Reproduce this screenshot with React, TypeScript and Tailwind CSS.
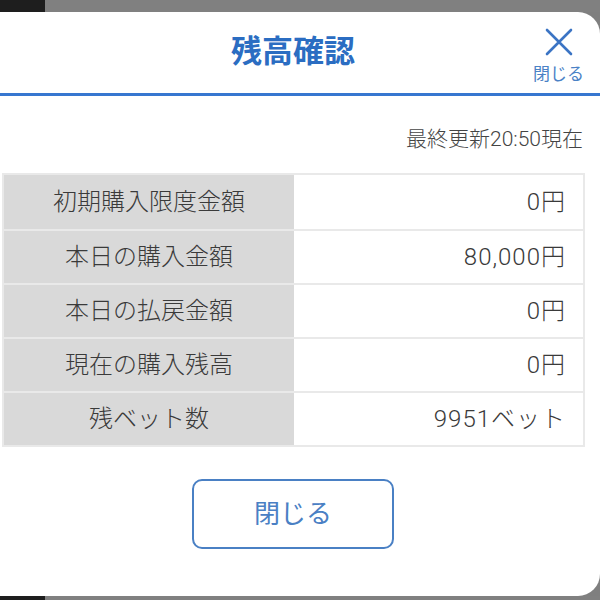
import React from 'react';

const rows: { label: string; value: string }[] = [
  { label: '初期購入限度金額', value: '0円' },
  { label: '本日の購入金額', value: '80,000円' },
  { label: '本日の払戻金額', value: '0円' },
  { label: '現在の購入残高', value: '0円' },
  { label: '残ベット数', value: '9951ベット' },
];

const font = { fontFamily: 'Roboto, "Noto Sans CJK JP", sans-serif' };

const App: React.FC = () => {
  return (
    <div className="w-[600px] h-[600px] flex flex-col bg-[#7f7f7f] overflow-hidden" style={font}>
      {/* backdrop strip */}
      <div className="flex h-[12px] shrink-0">
        <div className="w-[45px] bg-[#1e1e1e]" />
        <div className="flex-1 bg-[#808080]" />
      </div>

      {/* modal */}
      <div className="flex flex-col h-[584px] bg-white rounded-r-[22px]">
        <div className="relative h-[84px] flex items-center justify-center pr-[14px] border-b-[3px] border-[#3777d0]">
          <h2 className="text-[31px] font-bold text-[#2b6dc2]">残高確認</h2>
          <button className="absolute right-[16px] top-[16px] flex flex-col items-center text-[#4b82c6]">
            <svg width="28" height="28" viewBox="0 0 28 28" fill="none" stroke="#3b74c4" strokeWidth="2.6" strokeLinecap="round">
              <path d="M2 2 L26 26 M26 2 L2 26" />
            </svg>
            <span className="text-[17px] leading-none mt-[10px]">閉じる</span>
          </button>
        </div>

        <div className="flex justify-end pr-[17px] pt-[28px] pb-[19px]">
          <span className="text-[21px] leading-[30px] text-[#444] font-light">最終更新20:50現在</span>
        </div>

        <div className="ml-[2px] mr-[15px] border-2 border-[#e9e9e9] font-light">
          {rows.map((r, i) => (
            <div key={r.label} className={`flex h-[54px] ${i > 0 ? 'border-t-2 border-[#e9e9e9]' : ''}`}>
              <div className="w-[290px] bg-[#d9d9d9] flex items-center justify-center text-[24px] text-[#3a3a3a]">
                {r.label}
              </div>
              <div className="flex-1 flex items-center justify-end pr-[17px] text-[24px] tracking-[1px] text-[#3a3a3a]">
                {r.value}
              </div>
            </div>
          ))}
        </div>

        <div className="flex justify-center mt-[32px] pr-[14px]">
          <button className="w-[202px] h-[70px] rounded-[10px] border-2 border-[#4a80c4] text-[26px] text-[#4a80c4]">
            閉じる
          </button>
        </div>
      </div>

      <div className="flex flex-1">
        <div className="w-[45px] bg-[#1e1e1e]" />
        <div className="flex-1 bg-[#808080]" />
      </div>
    </div>
  );
};

export default App;
